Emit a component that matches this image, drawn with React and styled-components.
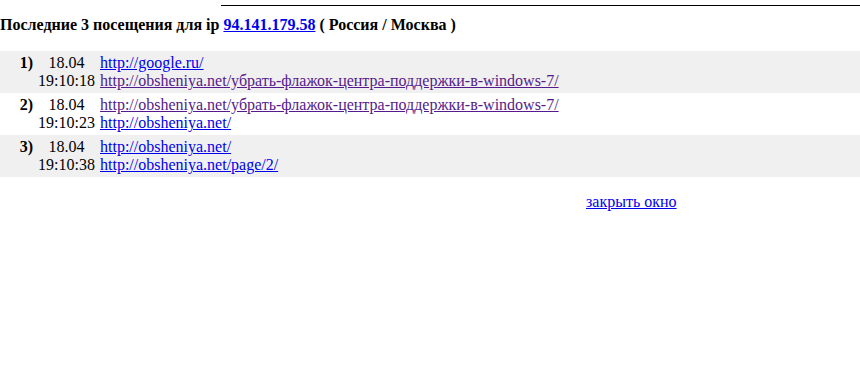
import React from "react";
import { styled, createGlobalStyle } from "styled-components";

const visits = [
  {
    n: 1,
    date: "18.04",
    time: "19:10:18",
    links: [
      { url: "http://google.ru/", visited: false },
      { url: "http://obsheniya.net/убрать-флажок-центра-поддержки-в-windows-7/", visited: true },
    ],
  },
  {
    n: 2,
    date: "18.04",
    time: "19:10:23",
    links: [
      { url: "http://obsheniya.net/убрать-флажок-центра-поддержки-в-windows-7/", visited: true },
      { url: "http://obsheniya.net/", visited: false },
    ],
  },
  {
    n: 3,
    date: "18.04",
    time: "19:10:38",
    links: [
      { url: "http://obsheniya.net/", visited: false },
      { url: "http://obsheniya.net/page/2/", visited: false },
    ],
  },
];

const App = () => {
  return (
    <>
      <GlobalStyle />
      <Page>
        <TopRule />
        <Title>
          Последние 3 посещения для ip <Link href="#">94.141.179.58</Link> ( Россия / Москва )
        </Title>
        <VisitList>
          {visits.map((v) => (
            <VisitRow key={v.n} $shaded={v.n % 2 === 1}>
              <Num>{v.n})</Num>
              <When>
                <span>{v.date}</span>
                <span>{v.time}</span>
              </When>
              <Links>
                {v.links.map((l, i) => (
                  <Link key={i} href="#" $visited={l.visited}>
                    {l.url}
                  </Link>
                ))}
              </Links>
            </VisitRow>
          ))}
        </VisitList>
        <CloseRow>
          <Link href="#">закрыть окно</Link>
        </CloseRow>
      </Page>
    </>
  );
};

const GlobalStyle = createGlobalStyle`
  body {
    margin: 0;
    background: #fff;
    color: #000;
    font-family: "Liberation Serif", "Times New Roman", serif;
    font-size: 16px;
  }
`;

const Page = styled.div`
  width: 860px;
  padding-top: 5px;
`;

const TopRule = styled.div`
  margin-left: 221px;
  border-top: 1px solid #000;
`;

const Title = styled.div`
  margin-top: 10px;
  font-weight: bold;
  line-height: 18px;
`;

const Link = styled.a`
  color: ${(p) => (p.$visited ? "#551a8b" : "#0000ee")};
  text-decoration: underline;
`;

const VisitList = styled.div`
  margin-top: 17px;
  display: flex;
  flex-direction: column;
`;

const VisitRow = styled.div`
  display: grid;
  grid-template-columns: 33px 67px 1fr;
  height: 42px;
  box-sizing: border-box;
  padding-top: 3px;
  line-height: 18px;
  background: ${(p) => (p.$shaded ? "#f0f0f0" : "#fff")};
`;

const Num = styled.div`
  font-weight: bold;
  text-align: right;
`;

const When = styled.div`
  display: flex;
  flex-direction: column;
  align-items: center;
`;

const Links = styled.div`
  display: flex;
  flex-direction: column;
  align-items: flex-start;
`;

const CloseRow = styled.div`
  margin-top: 16px;
  padding-left: 586px;
  line-height: 18px;
`;

export default App;
